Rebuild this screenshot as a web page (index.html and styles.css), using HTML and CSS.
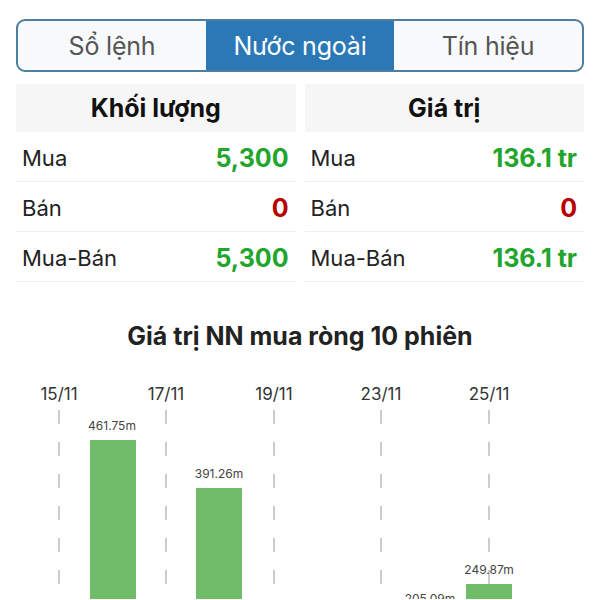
FILE: index.html
```html
<!doctype html>
<html lang="vi">
	<head>
		<meta charset="UTF-8">
		<title>Nước ngoài</title>
		<meta name="viewport" content="width=device-width, initial-scale=1.0">
		<link rel="stylesheet" href="styles.css">
	</head>
	<body>
		<div class="wrapper">

			<div class="tabs">
				<span class="tab">Sổ lệnh</span>
				<span class="tab active">Nước ngoài</span>
				<span class="tab">Tín hiệu</span>
			</div>

			<div class="tables">
				<div class="table">
					<div class="table-head">Khối lượng</div>
					<div class="row"><span>Mua</span><span class="up">5,300</span></div>
					<div class="row"><span>Bán</span><span class="down">0</span></div>
					<div class="row"><span>Mua-Bán</span><span class="up">5,300</span></div>
				</div>

				<div class="table">
					<div class="table-head">Giá trị</div>
					<div class="row"><span>Mua</span><span class="up">136.1 tr</span></div>
					<div class="row"><span>Bán</span><span class="down">0</span></div>
					<div class="row"><span>Mua-Bán</span><span class="up">136.1 tr</span></div>
				</div>
			</div>

			<h2 class="chart-title">Giá trị NN mua ròng 10 phiên</h2>
		</div>

		<svg class="chart" width="600" height="240" viewBox="0 0 600 240">
			<g class="axis">
				<text x="59" y="41">15/11</text>
				<text x="166" y="41">17/11</text>
				<text x="274" y="41">19/11</text>
				<text x="381" y="41">23/11</text>
				<text x="489" y="41">25/11</text>
			</g>
			<g class="grid">
				<line x1="59" y1="51" x2="59" y2="240" />
				<line x1="166" y1="51" x2="166" y2="240" />
				<line x1="274" y1="51" x2="274" y2="240" />
				<line x1="381" y1="51" x2="381" y2="240" />
				<line x1="489" y1="51" x2="489" y2="240" />
			</g>
			<g class="values">
				<text x="112" y="71">461.75m</text>
				<text x="219" y="119">391.26m</text>
				<text x="430" y="244">205.09m</text>
				<text x="489" y="215">249.87m</text>
			</g>
			<g class="bars">
				<rect x="90" y="81" width="46" height="161" />
				<rect x="196" y="129" width="46" height="113" />
				<rect x="412" y="256" width="46" height="10" />
				<rect x="466" y="225" width="46" height="17" />
			</g>
		</svg>
	</body>
</html>
```

FILE: styles.css
```css
* {
	padding: 0;
	margin: 0;
	box-sizing: border-box;
	font-family: Inter, Roboto, 'Liberation Sans', sans-serif;
}

body {
	background: #fff;
	color: #222;
	width: 600px;
	height: 600px;
	overflow: hidden;
}

.wrapper {
	padding: 19px 16px 0;
}

.tabs {
	display: grid;
	grid-template-columns: 1fr 1fr 1fr;
	height: 53px;
	border: 2px solid #4f7f9e;
	border-radius: 9px;
	overflow: hidden;
	background: #f8f9fa;
}

.tab {
	display: flex;
	align-items: center;
	justify-content: center;
	font-size: 25px;
	letter-spacing: -0.2px;
	color: #555;
}

.tab.active {
	background: #2a79b6;
	color: #fff;
}

.tables {
	display: grid;
	grid-template-columns: 1fr 1fr;
	gap: 9px;
	margin-top: 12px;
}

.table-head {
	height: 48px;
	display: flex;
	align-items: center;
	justify-content: center;
	background: #f6f6f6;
	font-size: 25px;
	font-weight: bold;
	color: #111;
}

.row {
	height: 50px;
	display: flex;
	align-items: center;
	justify-content: space-between;
	padding: 3px 7px 0 6px;
	border-bottom: 1px solid #efefef;
	font-size: 22px;
}

.row .up {
	color: #22a52c;
	font-weight: bold;
	font-size: 25px;
}

.row .down {
	color: #b80000;
	font-weight: bold;
	font-size: 25px;
}

.chart-title {
	text-align: center;
	font-size: 25px;
	font-weight: bold;
	color: #222;
	margin-top: 39px;
}

.chart {
	display: block;
	margin-top: 8px;
}

.axis text {
	font-size: 17px;
	fill: #333;
	text-anchor: middle;
}

.grid line {
	stroke: #9a9a9a;
	stroke-width: 1;
	stroke-dasharray: 14 18;
}

.values text {
	font-size: 12px;
	fill: #444;
	text-anchor: middle;
}

.bars rect {
	fill: #71bc68;
}
```
